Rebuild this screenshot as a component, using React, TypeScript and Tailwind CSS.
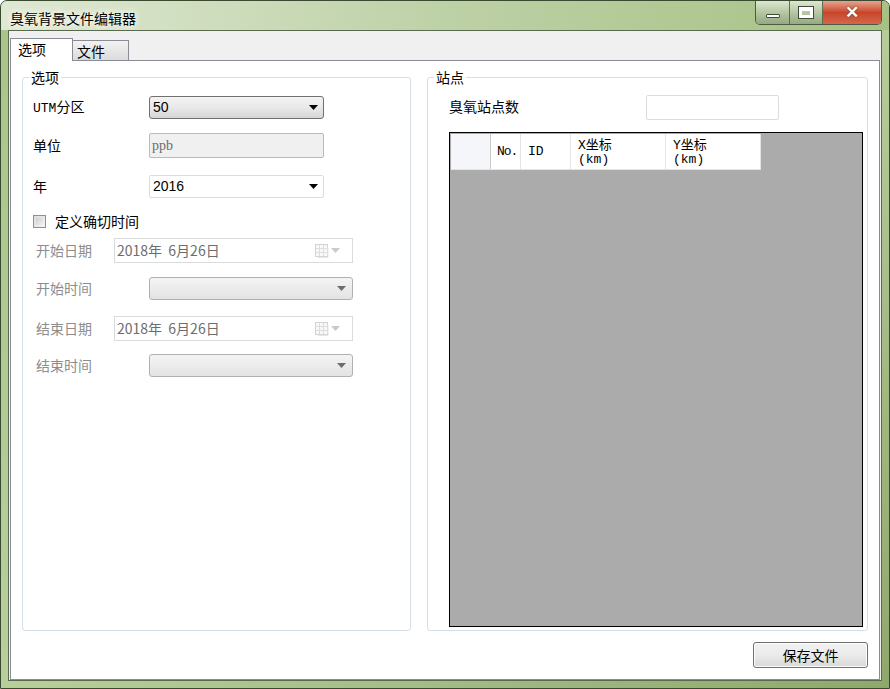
import React from "react";

const CJK = "font-['Noto_Sans_CJK_SC',sans-serif]";

function Arrow({ gray }: { gray?: boolean }) {
  return (
    <svg width="9" height="5" viewBox="0 0 9 5" className="shrink-0">
      <path d="M0 0h9L4.5 5z" fill={gray ? "#6d6d6d" : "#000"} />
    </svg>
  );
}

function CalendarIcon() {
  return (
    <div className="flex items-center gap-[2px] opacity-60">
      <svg width="14" height="14" viewBox="0 0 14 14">
        <rect x="0.5" y="0.5" width="12" height="12" fill="#f4f4f4" stroke="#b8b8b8" />
        <path d="M4.5 1v11M8.5 1v11M1 4.5h11M1 8.5h11" stroke="#c8c8c8" />
        <path d="M13 3v10.5H3" stroke="#d8d8d8" fill="none" />
      </svg>
      <svg width="9" height="5" viewBox="0 0 9 5">
        <path d="M0 0h9L4.5 5z" fill="#a8a8a8" />
      </svg>
    </div>
  );
}

function DatePicker() {
  return (
    <div className="w-[239px] h-[25px] border border-[#d9dcdf] bg-white flex items-center justify-between pl-[2px] pr-[12px]">
      <span className={`text-[14px] text-[#6d6d6d] ${CJK} whitespace-pre`}>2018年  6月26日</span>
      <CalendarIcon />
    </div>
  );
}

function DisabledCombo() {
  return (
    <div className="w-[204px] h-[23px] rounded-[3px] border border-[#adb2b5] bg-gradient-to-b from-[#f4f4f4] to-[#e3e3e3] flex items-center justify-end pr-[6px]">
      <Arrow gray />
    </div>
  );
}

function Label({ children, gray }: { children: React.ReactNode; gray?: boolean }) {
  return (
    <span className={`text-[14px] ${CJK} ${gray ? "text-[#8d8d8d]" : "text-black"}`}>{children}</span>
  );
}

export default function App() {
  return (
    <div className="w-[890px] h-[689px] bg-gradient-to-br from-[#a9c48a] via-[#b8cf9c] to-[#8ea86c] rounded-t-[7px] border border-[#3a4a30] flex flex-col overflow-hidden">
      {/* Title bar */}
      <div className="h-[29px] flex items-start justify-between shrink-0 bg-gradient-to-r from-[#dfe8d3] via-[#bdd1a6] to-[#a7c185]">
        <div className={`pl-[9px] pt-[8px] text-[14px] leading-[18px] text-black ${CJK} [text-shadow:0_0_6px_#fff,0_0_8px_#fff]`}>
          臭氧背景文件编辑器
        </div>
        <div className="flex mr-[7px] h-[24px] border border-t-0 border-[#4e5a46] rounded-b-[5px] overflow-hidden">
          <div className="w-[34px] flex items-center justify-center bg-gradient-to-b from-[#dde7d2] via-[#b6c7a3] to-[#94a982] border-r border-[#5f6d55]">
            <div className="w-[14px] h-[4px] mt-[6px] bg-white border border-[#3f4a3a] rounded-[1px]" />
          </div>
          <div className="w-[33px] flex items-center justify-center bg-gradient-to-b from-[#dde7d2] via-[#b6c7a3] to-[#94a982] border-r border-[#5f6d55]">
            <div className="w-[14px] h-[11px] border-[3px] border-t-[4px] border-white outline outline-1 outline-[#3f4a3a]" />
          </div>
          <div className="w-[58px] flex items-center justify-center bg-gradient-to-b from-[#e6a38e] via-[#c8452b] to-[#d5674a]">
            <span className="text-white text-[17px] font-bold font-['Liberation_Sans',sans-serif] [text-shadow:0_0_1px_#333,0_0_1px_#333]">✕</span>
          </div>
        </div>
      </div>

      {/* Client area */}
      <div className="flex-1 mx-[7px] mb-[7px] border border-[#5a6a4e] bg-[#f0f0f0] flex flex-col">
        {/* Tab strip */}
        <div className="h-[29px] flex items-end pl-[1px] shrink-0">
          <div className={`h-[23px] w-[63px] bg-white border border-b-0 border-[#898c95] text-[14px] ${CJK} pl-[7px] leading-[18px] pt-[1px] relative z-10 -mb-px`}>
            选项
          </div>
          <div className={`h-[20px] w-[56px] bg-gradient-to-b from-[#f2f2f2] to-[#dcdcdc] border border-l-0 border-b-0 border-[#898c95] text-[14px] ${CJK} pl-[4px] leading-[18px] pt-[1px]`}>
            文件
          </div>
        </div>

        {/* Tab page */}
        <div className="flex-1 bg-white border border-[#898c95] mx-[1px] flex flex-col px-[11px] pt-[7px] pb-[11px]">
          <div className="flex gap-[16px] flex-1 min-h-0">
            {/* 选项 group */}
            <fieldset className="w-[389px] border border-[#d5dfe5] rounded-[3px] px-[10px] pb-0 pt-0 min-w-0">
              <legend className={`text-[14px] ${CJK} px-[2px] ml-[-4px] leading-[18px]`}>选项</legend>
              <div className="flex flex-col">
                <div className="flex items-center h-[22px] mt-[10px]">
                  <div className="w-[116px] flex">
                    <Label>
                      <span className="font-['Liberation_Mono',monospace] text-[13px]">UTM</span>分区
                    </Label>
                  </div>
                  <div className="w-[175px] h-[23px] rounded-[3px] border border-[#707070] bg-gradient-to-b from-[#f3f3f3] via-[#e9e9e9] to-[#d6d6d6] flex items-center justify-between pl-[3px] pr-[5px]">
                    <span className="text-[14px] font-['Liberation_Sans',sans-serif]">50</span>
                    <Arrow />
                  </div>
                </div>
                <div className="flex items-center mt-[15px]">
                  <div className="w-[116px] flex">
                    <Label>单位</Label>
                  </div>
                  <div className="w-[175px] h-[25px] border border-[#b8babc] rounded-[2px] bg-[#f0f0f0] flex items-center pl-[2px]">
                    <span className="text-[14px] text-[#6d6d6d] font-['Liberation_Serif',serif]">ppb</span>
                  </div>
                </div>
                <div className="flex items-center mt-[17px]">
                  <div className="w-[116px] flex">
                    <Label>年</Label>
                  </div>
                  <div className="w-[175px] h-[23px] border border-[#dadcde] rounded-[2px] bg-white flex items-center justify-between pl-[3px] pr-[5px]">
                    <span className="text-[14px] font-['Liberation_Sans',sans-serif]">2016</span>
                    <Arrow />
                  </div>
                </div>
                <div className="flex items-center mt-[13px] gap-[9px]">
                  <div className="w-[13px] h-[13px] border border-[#8e8f8f] bg-gradient-to-br from-[#dcdcdc] to-[#f6f6f6] p-[2px]">
                    <div className="w-full h-full bg-gradient-to-br from-[#cbcfd5] to-[#f1f2f3]" />
                  </div>
                  <Label>定义确切时间</Label>
                </div>
                <div className="flex items-center mt-[6px]">
                  <div className="w-[81px] flex pl-[3px]">
                    <Label gray>开始日期</Label>
                  </div>
                  <DatePicker />
                </div>
                <div className="flex items-center mt-[14px]">
                  <div className="w-[116px] flex pl-[3px]">
                    <Label gray>开始时间</Label>
                  </div>
                  <DisabledCombo />
                </div>
                <div className="flex items-center mt-[16px]">
                  <div className="w-[81px] flex pl-[3px]">
                    <Label gray>结束日期</Label>
                  </div>
                  <DatePicker />
                </div>
                <div className="flex items-center mt-[13px]">
                  <div className="w-[116px] flex pl-[3px]">
                    <Label gray>结束时间</Label>
                  </div>
                  <DisabledCombo />
                </div>
              </div>
            </fieldset>

            {/* 站点 group */}
            <fieldset className="flex-1 border border-[#d5dfe5] rounded-[3px] pl-[21px] pr-[4px] pb-[3px] pt-0 min-w-0 flex flex-col">
              <legend className={`text-[14px] ${CJK} px-[2px] ml-[-15px] leading-[18px]`}>站点</legend>
              <div className="flex items-start mt-[9px]">
                <div className="w-[197px] flex pt-[1px]">
                  <Label>臭氧站点数</Label>
                </div>
                <div className="w-[133px] h-[25px] border border-[#dadcde] rounded-[2px] bg-white" />
              </div>
              <div className="flex-1 mt-[12px] border border-black bg-[#ababab] pt-[1px] pl-[1px] flex flex-col">
                <div className="flex h-[36px] bg-white w-[310px] font-['Liberation_Mono',monospace] text-[13px] leading-[13px] border-b border-[#e4e4e4]">
                  <div className="w-[40px] bg-[#f4f6fa] border-r border-[#c9c9c9]" />
                  <div className="w-[30px] border-r border-[#e4e4e4] flex items-center pl-[6px] tracking-[-1px]">No.</div>
                  <div className="w-[50px] border-r border-[#e4e4e4] flex items-center pl-[7px]">ID</div>
                  <div className="w-[95px] border-r border-[#e4e4e4] flex flex-col justify-center pl-[7px] text-[13px] leading-[14px]">
                    <span>X<span className={CJK}>坐标</span></span>
                    <span>(km)</span>
                  </div>
                  <div className="w-[95px] border-r border-[#e4e4e4] flex flex-col justify-center pl-[7px] text-[13px] leading-[14px]">
                    <span>Y<span className={CJK}>坐标</span></span>
                    <span>(km)</span>
                  </div>
                </div>
              </div>
            </fieldset>
          </div>

          <div className="flex justify-end mt-[11px]">
            <div className={`w-[115px] h-[26px] rounded-[3px] border border-[#707070] bg-gradient-to-b from-[#f2f2f2] via-[#ebebeb] to-[#d8d8d8] flex items-center justify-center text-[14px] ${CJK} shadow-[inset_0_0_0_1px_#fcfcfc]`}>
              保存文件
            </div>
          </div>
        </div>
      </div>
    </div>
  );
}
